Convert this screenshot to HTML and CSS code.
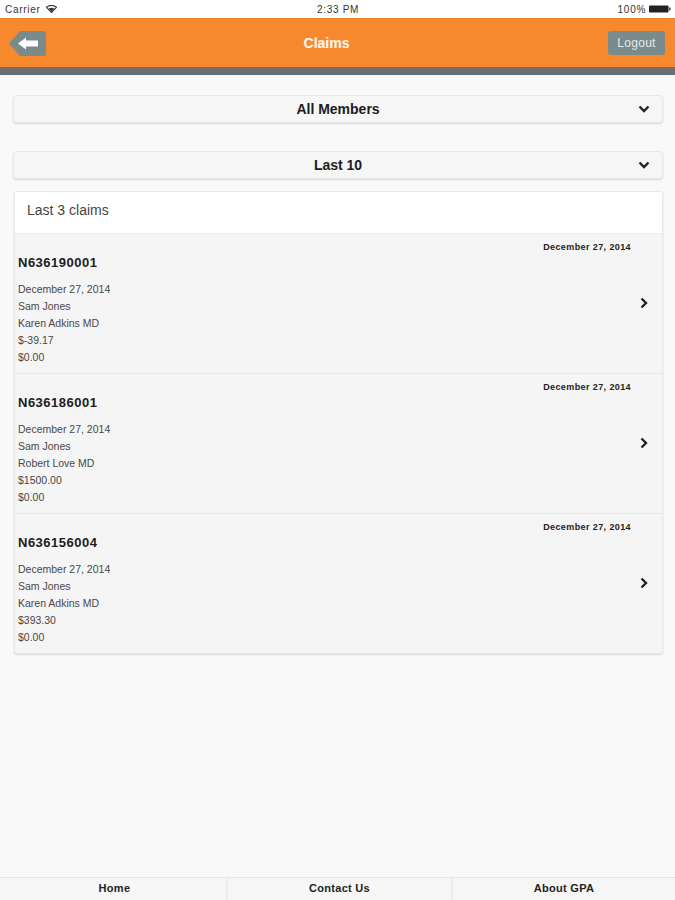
FILE: index.html
```html
<!DOCTYPE html>
<html lang="en">
<head>
  <meta charset="UTF-8">
  <title>Claims</title>
  <meta name="viewport" content="width=device-width, initial-scale=1.0">
  <link rel="stylesheet" href="styles.css">
</head>
<body>

<div class="status-bar">
  <div class="status-left">
    <span>Carrier</span>
    <svg class="wifi" width="11" height="8" viewBox="0 0 11 8">
      <path d="M0.5 2.2 C3.3 -0.2 7.7 -0.2 10.5 2.2 L5.5 7.6 Z" fill="none" stroke="#333" stroke-width="1.1"/>
      <path d="M2.8 3.6 C4.4 2.6 6.6 2.6 8.2 3.6 L5.5 7 Z" fill="#333"/>
    </svg>
  </div>
  <div class="status-time">2:33 PM</div>
  <div class="status-right">
    <span>100%</span>
    <svg width="22" height="8" viewBox="0 0 22 8">
      <rect x="0" y="0.5" width="19.5" height="7" rx="1" fill="#222"/>
      <rect x="20" y="2.5" width="1.5" height="3" fill="#444"/>
    </svg>
  </div>
</div>

<header class="app-header">
  <a class="back-btn" aria-label="Back">
    <svg width="37" height="25" viewBox="0 0 37 25">
      <path d="M11 0 H34 Q37 0 37 3 V22 Q37 25 34 25 H11 L0 12.5 Z" fill="#7a8b8b"/>
      <path d="M9 12.5 L17 6.5 V9.5 H29 V15.5 H17 V18.5 Z" fill="#fff"/>
    </svg>
  </a>
  <h1>Claims</h1>
  <a class="logout-btn">Logout</a>
</header>

<main class="content">
  <div class="select-btn">
    <span>All Members</span>
    <svg class="chevron" width="12" height="8" viewBox="0 0 12 8"><path d="M1.5 1.5 L6 6 L10.5 1.5" fill="none" stroke="#222" stroke-width="2.4"/></svg>
  </div>
  <div class="select-btn select-second">
    <span>Last 10</span>
    <svg class="chevron" width="12" height="8" viewBox="0 0 12 8"><path d="M1.5 1.5 L6 6 L10.5 1.5" fill="none" stroke="#222" stroke-width="2.4"/></svg>
  </div>

  <section class="claims-card">
    <div class="claims-head">Last 3 claims</div>

    <div class="claim-row">
      <div class="claim-date">December 27, 2014</div>
      <h2>N636190001</h2>
      <p>December 27, 2014</p>
      <p>Sam Jones</p>
      <p>Karen Adkins MD</p>
      <p>$-39.17</p>
      <p>$0.00</p>
      <svg class="row-arrow" width="8" height="12" viewBox="0 0 8 12"><path d="M1.5 1.5 L6 6 L1.5 10.5" fill="none" stroke="#222" stroke-width="2.4"/></svg>
    </div>

    <div class="claim-row">
      <div class="claim-date">December 27, 2014</div>
      <h2>N636186001</h2>
      <p>December 27, 2014</p>
      <p>Sam Jones</p>
      <p>Robert Love MD</p>
      <p>$1500.00</p>
      <p>$0.00</p>
      <svg class="row-arrow" width="8" height="12" viewBox="0 0 8 12"><path d="M1.5 1.5 L6 6 L1.5 10.5" fill="none" stroke="#222" stroke-width="2.4"/></svg>
    </div>

    <div class="claim-row">
      <div class="claim-date">December 27, 2014</div>
      <h2>N636156004</h2>
      <p>December 27, 2014</p>
      <p>Sam Jones</p>
      <p>Karen Adkins MD</p>
      <p>$393.30</p>
      <p>$0.00</p>
      <svg class="row-arrow" width="8" height="12" viewBox="0 0 8 12"><path d="M1.5 1.5 L6 6 L1.5 10.5" fill="none" stroke="#222" stroke-width="2.4"/></svg>
    </div>
  </section>
</main>

<footer class="tab-bar">
  <a>Home</a>
  <a>Contact Us</a>
  <a>About GPA</a>
</footer>

</body>
</html>
```

FILE: styles.css
```css
* {
  margin: 0;
  padding: 0;
  box-sizing: border-box;
}

html, body {
  height: 100%;
}

body {
  font-family: "Liberation Sans", Arial, sans-serif;
  background-color: #f9f9f9;
  color: #222;
  display: flex;
  flex-direction: column;
  overflow: hidden;
}

.status-bar {
  height: 18px;
  background-color: #fff;
  display: grid;
  grid-template-columns: 1fr auto 1fr;
  align-items: center;
  padding: 0 4px 0 5px;
  font-size: 10px;
  color: #333;
  letter-spacing: 0.7px;
}

.status-left {
  display: flex;
  align-items: center;
  gap: 6px;
}

.status-right {
  display: flex;
  align-items: center;
  justify-content: flex-end;
  gap: 3px;
}

.app-header {
  height: 57px;
  background-color: #f6882d;
  border-top: 1px solid #ef7f1f;
  border-bottom: 8px solid #6d6e6f;
  display: flex;
  align-items: center;
  justify-content: space-between;
  padding: 0 10px 0 9px;
  position: relative;
}

.back-btn {
  display: flex;
}

.app-header h1 {
  position: absolute;
  left: 0;
  right: 22px;
  text-align: center;
  font-size: 14px;
  font-weight: bold;
  color: #fdf1e4;
  text-shadow: 0 0 1px rgba(255, 255, 255, 0.4);
}

.logout-btn {
  width: 57px;
  height: 24px;
  background-color: #7a8b8b;
  border-radius: 3px;
  color: #e3e9e9;
  font-size: 12px;
  letter-spacing: 0.3px;
  display: flex;
  align-items: center;
  justify-content: center;
  position: relative;
}

.content {
  flex: 1;
  padding: 20px 12px 0 13px;
}

.select-btn {
  height: 28px;
  background-color: #f6f6f6;
  border: 1px solid #e8e8e8;
  border-radius: 4px;
  box-shadow: 0 1px 2px rgba(0, 0, 0, 0.14);
  display: flex;
  align-items: center;
  justify-content: center;
  font-size: 14px;
  font-weight: bold;
  color: #1c1c1c;
  position: relative;
}

.select-second {
  margin-top: 28px;
}

.chevron {
  position: absolute;
  right: 12px;
  top: 9px;
}

.claims-card {
  margin: 12px 0 0 1px;
  border: 1px solid #e8e8e8;
  border-radius: 3px;
  box-shadow: 0 1px 2px rgba(0, 0, 0, 0.14);
  background-color: #f5f5f5;
}

.claims-head {
  height: 42px;
  background-color: #fff;
  border-bottom: 1px solid #ececec;
  padding-left: 12px;
  font-size: 14px;
  line-height: 37px;
  color: #444;
}

.claim-row {
  height: 140px;
  padding: 7px 3px 0;
  border-bottom: 1px solid #e6e6e6;
  position: relative;
}

.claim-row:last-child {
  height: 139px;
  border-bottom: none;
}

.claim-date {
  text-align: right;
  padding-right: 28px;
  font-size: 9px;
  line-height: 12px;
  font-weight: bold;
  letter-spacing: 0.4px;
  color: #222;
}

.claim-row h2 {
  font-size: 13px;
  line-height: 16px;
  font-weight: bold;
  color: #1c1c1c;
  margin: 2px 0 10px;
  letter-spacing: 0.5px;
}

.claim-row p {
  font-size: 10.5px;
  line-height: 17px;
  color: #484848;
}

.row-arrow {
  position: absolute;
  right: 14px;
  top: 63px;
}

.tab-bar {
  height: 23px;
  display: grid;
  grid-template-columns: 225px 225px 1fr;
  border-top: 1px solid #e6e6e6;
  padding-left: 3px;
  background-color: #f6f6f6;
}

.tab-bar a {
  font-size: 11px;
  font-weight: bold;
  letter-spacing: 0.3px;
  color: #222;
  text-align: center;
  line-height: 21px;
  border-right: 2px solid #ececec;
}

.tab-bar a:last-child {
  border-right: none;
}
```
